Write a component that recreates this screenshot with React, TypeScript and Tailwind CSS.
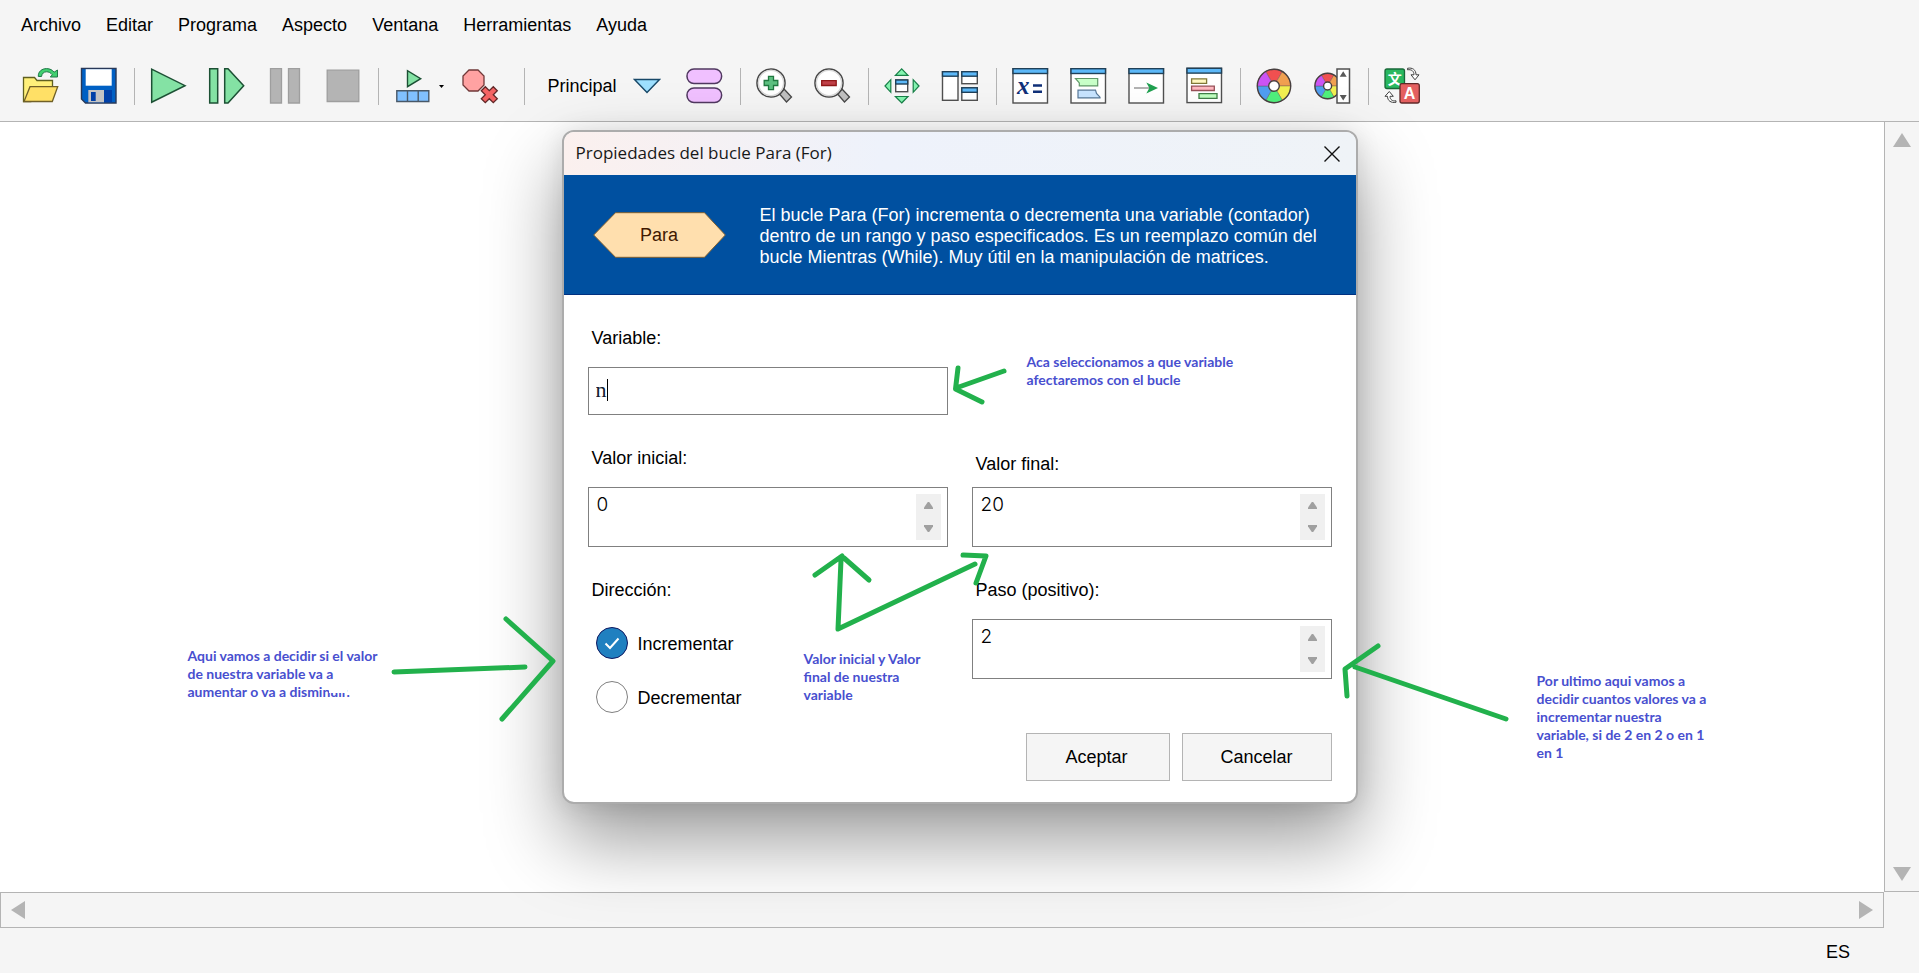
import { useState, type ReactNode } from "react";

const menus = ["Archivo", "Editar", "Programa", "Aspecto", "Ventana", "Herramientas", "Ayuda"];

function Icon({ children }: { children: ReactNode }) {
  return (
    <svg width="40" height="40" viewBox="0 0 40 40" fill="none" aria-hidden="true" className="shrink-0">
      {children}
    </svg>
  );
}

function Tool({ label, children }: { label: string; children: ReactNode }) {
  return (
    <button type="button" aria-label={label} className="flex w-[58px] shrink-0 justify-center">
      <Icon>{children}</Icon>
    </button>
  );
}

function Separator() {
  return (
    <div className="flex w-3 shrink-0 justify-end pt-0.5 pr-1">
      <div className="h-[37px] w-px bg-[#b4b4b4]" />
    </div>
  );
}

function MiniWindow({ x, y, w, h, bar }: { x: number; y: number; w: number; h: number; bar: number }) {
  return (
    <>
      <rect x={x} y={y} width={w} height={h} fill="#fff" stroke="#505050" strokeWidth="1.4" />
      <rect x={x} y={y} width={w} height={bar} fill="#5cb8f8" stroke="#204058" strokeWidth="1.4" />
    </>
  );
}

const wheelColors = ["#f05050", "#f0a050", "#f2f050", "#50f07c", "#509ef0", "#cc54f4"];

function Wheel({ cx, cy, r, hole }: { cx: number; cy: number; r: number; hole: number }) {
  const at = (deg: number) => {
    const a = ((deg - 90) * Math.PI) / 180;
    return `${cx + r * Math.cos(a)} ${cy + r * Math.sin(a)}`;
  };
  return (
    <>
      {wheelColors.map((c, i) => (
        <path key={c} fill={c} d={`M${cx} ${cy}L${at(i * 60 - 30)}A${r} ${r} 0 0 1 ${at(i * 60 + 30)}Z`} stroke="#605050" strokeWidth=".4" />
      ))}
      <circle cx={cx} cy={cy} r={r} stroke="#484040" strokeWidth="1.4" />
      <circle cx={cx} cy={cy} r={hole} fill="#fff" stroke="#484040" strokeWidth="1.4" />
    </>
  );
}

function Lens() {
  return (
    <>
      <path d="M25.500 28l4.500-5 7.500 8-5 5z" fill="#c0c0c0" stroke="#484848" strokeWidth="1.3" />
      <circle cx="17" cy="17" r="14" fill="#fff" stroke="#484848" strokeWidth="1.6" />
      <circle cx="17" cy="17" r="12.6" stroke="#d8d8d8" strokeWidth="1.4" />
    </>
  );
}

function Toolbar() {
  return (
    <div className="flex h-[71px] items-start overflow-hidden pt-4 pl-[11px]">
      <Tool label="Abrir">
        <path d="M3.5 35.5v-24h11l2.5 3h15.500V21L11 35.500z" fill="#fff07a" stroke="#606020" strokeWidth="1.3" />
        <path d="M10 20.700h27.700l-5.400 14.800H4z" fill="#ffe066" stroke="#706028" strokeWidth="1.3" />
        <path d="M18.300 10.500C18 5.500 22 2.600 26.500 2.600c3.500 0 6 1.500 7.600 3.600L37.500 4v7h-7.200l2-2.200C30.500 6.500 28.600 5.800 26.500 5.800c-2.700 0-4.600 1.700-5 4.700z" fill="#40d070" stroke="#207848" />
      </Tool>
      <Tool label="Guardar">
        <path d="M3.500 2.500H38V37H7.500l-4-4z" fill="#0060c4" stroke="#283858" strokeWidth="1.400" />
        <path d="M7.700 3.200h26v16.500h-26z" fill="#fff" />
        <path d="M10.300 24H34v12.300H10.300z" fill="#0040a8" />
        <path d="M10.300 24H26v12.300H10.300z" fill="#c4c4c4" />
        <path d="M13 26h4.700v9H13z" fill="#0040a8" />
      </Tool>
      <Separator />
      <Tool label="Ejecutar">
        <path d="M3.700 3.200v33l33.300-16.500z" fill="#84e2a4" stroke="#1c5034" strokeWidth="1.500" />
      </Tool>
      <Tool label="Paso a paso">
        <path d="M3.700 2.700h8V37h-8zM18.700 2.700H22l15.700 17L22 37h-3.300z" fill="#84e2a4" stroke="#1c5034" strokeWidth="1.500" />
      </Tool>
      <Tool label="Pausar">
        <path d="M6.500 2.700h11V37h-11zM24.500 2.700h11V37h-11z" fill="#b4b4b4" stroke="#9e9e9e" strokeWidth="1.300" />
      </Tool>
      <Tool label="Detener">
        <path d="M5.200 4.200h31.600v31.300H5.200z" fill="#b4b4b4" stroke="#9e9e9e" strokeWidth="1.300" />
      </Tool>
      <Separator />
      <button type="button" aria-label="Velocidad" className="flex w-[54px] shrink-0 justify-center pl-1">
        <Icon>
          <path d="M15.500 4.700v16l13.200-8z" fill="#84e2a4" stroke="#1c5034" strokeWidth="1.400" />
          <path d="M4.800 24.700h32v10.800h-32zM15.500 24.700v10.800M26.200 24.700v10.800" fill="#80c0ff" stroke="#485868" strokeWidth="1.400" />
        </Icon>
      </button>
      <button type="button" aria-label="Opciones de velocidad" className="flex h-10 w-[14px] shrink-0 items-center pl-0.5">
        <svg width="5" height="3" viewBox="0 0 5 3" aria-hidden="true">
          <path d="M0 0h5L2.500 3z" fill="#000" />
        </svg>
      </button>
      <Tool label="Quitar puntos de interrupción">
        <path d="M9 4h9l6 6v9l-6 6H9l-6-6v-9z" fill="#ffa2a2" stroke="#703838" strokeWidth="1.300" />
        <path d="M21.300 24.700l4-4 4 4 4-4 4 4-4 4 4 4-4 4-4-4-4 4-4-4 4-4z" fill="#f46464" stroke="#602828" strokeWidth="1.300" />
      </Tool>
      <div className="w-2 shrink-0" />
      <Separator />
      <button type="button" className="flex h-10 w-[146px] shrink-0 items-center justify-center gap-4 pl-1">
        <span>Principal</span>
        <svg width="28" height="16" viewBox="0 0 28 16" aria-hidden="true">
          <path d="M1.500 1.500h25L14 14.500z" fill="#9ee0ff" stroke="#184868" strokeWidth="1.400" />
        </svg>
      </button>
      <Tool label="Funciones">
        <rect x="3" y="3" width="34.600" height="14.600" rx="7" fill="#f0c0ff" stroke="#503860" strokeWidth="1.500" />
        <rect x="3" y="22" width="34.600" height="14.600" rx="7" fill="#f0c0ff" stroke="#503860" strokeWidth="1.500" />
      </Tool>
      <Separator />
      <Tool label="Acercar">
        <Lens />
        <path d="M14.500 10.300h5v4.200h4.300v5h-4.300v4.200h-5v-4.200h-4.300v-5h4.300z" fill="#5cc080" stroke="#207840" strokeWidth="1.300" />
      </Tool>
      <Tool label="Alejar">
        <Lens />
        <path d="M9.700 14.600h14.500v4.900H9.700z" fill="#c04048" stroke="#901818" strokeWidth="1.300" />
      </Tool>
      <Separator />
      <Tool label="Mover ventana">
        <path d="M19.700 2.800l6.300 6.500H13.400zM19.700 37l6.300-6.500H13.400zM3 20l5.800-6.300v12.600zM37 20l-5.800-6.300v12.600z" fill="#84f4b0" stroke="#188048" strokeWidth="1.200" />
        <MiniWindow x={13.700} y={14} w={12} h={11.700} bar={4} />
      </Tool>
      <Tool label="Organizar ventanas">
        <MiniWindow x={2.500} y={5.700} w={15.500} h={28.600} bar={4.500} />
        <MiniWindow x={21.800} y={5.700} w={15.500} h={12} bar={4.500} />
        <MiniWindow x={21.800} y={21.800} w={15.500} h={12.500} bar={4.500} />
      </Tool>
      <Separator />
      <Tool label="Ventana de variables">
        <MiniWindow x={3} y={2.700} w={34.500} h={34.300} bar={4.800} />
        <text x="7" y="28" fontFamily="Liberation Serif, serif" fontSize="25" fontWeight="700" fontStyle="italic" fill="#103078">x</text>
        <path d="M23 18.300h9v2.500h-9zM23 24.600h9v2.500h-9z" fill="#103078" />
      </Tool>
      <Tool label="Ventana de consola">
        <MiniWindow x={3} y={2.700} w={34.500} h={34.300} bar={4.800} />
        <path d="M7.500 12.500h22.200v7.400H11.300v-3z" fill="#c8ffc8" stroke="#609868" strokeWidth="1.200" />
        <path d="M10 24.200h17.500l1 3.300 3.500 3.700v.700H10z" fill="#c8e4ff" stroke="#587898" strokeWidth="1.200" />
      </Tool>
      <Tool label="Ventana de ejecución">
        <MiniWindow x={3} y={2.700} w={34.500} h={34.300} bar={4.800} />
        <path d="M8 22h16" stroke="#a0a0a0" strokeWidth="1.600" />
        <path d="M20.300 16.500L32 22l-11.700 5.500 3-5.500z" fill="#20a050" />
      </Tool>
      <Tool label="Ventana de código">
        <MiniWindow x={3} y={2.300} w={34.500} h={34.300} bar={4.800} />
        <path d="M7.600 12.800h15v4.500h-15z" fill="#fff8c0" stroke="#807838" strokeWidth="1.300" />
        <path d="M7.600 20.200h22.700v4.300H7.600z" fill="#ffb8c0" stroke="#985058" strokeWidth="1.300" />
        <path d="M15 27.600h18v4.700H15z" fill="#c0ffc0" stroke="#408048" strokeWidth="1.300" />
      </Tool>
      <Separator />
      <Tool label="Colores">
        <Wheel cx={20} cy={20} r={16.700} hole={5.300} />
      </Tool>
      <Tool label="Esquema de color">
        <Wheel cx={15.600} cy={20} r={12.700} hole={4} />
        <path d="M25 3h12.500v34H25z" fill="#fff" stroke="#505050" strokeWidth="1.500" />
        <path d="M31.200 5.300l3.500 5.500h-7zM31.200 34.500l3.500-5.500h-7z" fill="#585858" />
      </Tool>
      <Separator />
      <Tool label="Idioma">
        <rect x="3" y="3" width="19.500" height="19.500" rx="2" fill="#28b860" stroke="#186838" strokeWidth="1.300" />
        <text x="12.700" y="18" textAnchor="middle" fontFamily="Noto Sans CJK SC, sans-serif" fontSize="14" fontWeight="700" fill="#fff">文</text>
        <rect x="18" y="17.700" width="19.300" height="19.300" rx="2" fill="#e46060" stroke="#602828" strokeWidth="1.300" />
        <text x="27.600" y="33" textAnchor="middle" fontFamily="Liberation Sans, sans-serif" fontSize="16" fontWeight="700" fill="#fff">A</text>
        <path d="M25.500 3.800c4-.6 6.500 1.200 6.500 5h-3l4 5 4-5h-3c0-5-3.500-7.500-8.500-6.500z" fill="#fff" stroke="#404040" />
        <path d="M14 36.300c-5 .8-8.500-1.500-8.500-6H3L7.300 25.500l4 4.800H8c0 3.500 2.500 5 6 4.500z" fill="#fff" stroke="#404040" />
      </Tool>
    </div>
  );
}

function Spinner({ id, initial, label, className }: { id: string; initial: string; label: string; className: string }) {
  const [value, setValue] = useState(initial);
  const step = (d: number) => setValue(String((Number(value) || 0) + d));
  return (
    <div className="flex flex-col">
      <label htmlFor={id} className={className}>{label}</label>
      <div className="flex h-[60px] items-start border border-[#808080] bg-white p-1.5 pt-0 pl-2">
        <input
          id={id}
          value={value}
          onChange={(e) => setValue(e.target.value)}
          className="h-8 min-w-0 flex-1 font-[Inter,sans-serif] text-[19px] font-light text-black outline-none"
        />
        <div className="mt-1.5 flex w-[25px] flex-col bg-[#f0f0f0]">
          <button type="button" aria-label={`Aumentar ${label}`} onClick={() => step(1)} className="flex h-[23px] items-center justify-center">
            <svg width="9" height="7" viewBox="0 0 9 7" aria-hidden="true"><path d="M3.800 0h1.400L9 5.500V7H0V5.500z" fill="#a0a0a0" /></svg>
          </button>
          <button type="button" aria-label={`Disminuir ${label}`} onClick={() => step(-1)} className="flex h-[23px] items-center justify-center">
            <svg width="9" height="7" viewBox="0 0 9 7" aria-hidden="true"><path d="M3.800 7h1.400L9 1.500V0H0v1.500z" fill="#a0a0a0" /></svg>
          </button>
        </div>
      </div>
    </div>
  );
}

function Direction({ value, label, current, onPick }: { value: string; label: string; current: string; onPick: (v: string) => void }) {
  const on = current === value;
  return (
    <label className="flex h-8 items-center gap-2.5 pl-2">
      <span className="relative flex size-8">
        <input
          type="radio"
          name="direccion"
          checked={on}
          onChange={() => onPick(value)}
          className="size-8 appearance-none rounded-full border border-[#808080] bg-white checked:border-[#101860] checked:bg-[#2080c0]"
        />
        {on && (
          <svg className="pointer-events-none absolute inset-0" width="32" height="32" viewBox="0 0 32 32" fill="none" aria-hidden="true">
            <path d="M9.500 16.500l4.500 4.500 8.500-9.500" stroke="#fff" strokeWidth="2" />
          </svg>
        )}
      </span>
      <span className="pt-0.5">{label}</span>
    </label>
  );
}

function Dialog() {
  const [dir, setDir] = useState("inc");
  const [variable, setVariable] = useState("n");
  return (
    <section
      role="dialog"
      aria-label="Propiedades del bucle Para (For)"
      className="w-[796px] overflow-hidden rounded-xl border-2 border-[#acacac] bg-white shadow-[0_36px_76px_rgba(0,0,0,0.40),0_2px_24px_rgba(0,0,0,0.10)]"
    >
      <div className="flex h-[43px] items-center justify-between bg-linear-to-r from-[#fbf0ee] via-[#eef2fb] via-40% to-[#eff3f7] pr-4 pl-3">
        <h1 className="font-['Open_Sans',sans-serif] text-[17px] text-[#181818]">Propiedades del bucle Para (For)</h1>
        <button type="button" aria-label="Cerrar">
          <svg width="16" height="16" viewBox="0 0 16 16" aria-hidden="true" className="block">
            <path d="M.500.500l15 15M15.500.500l-15 15" stroke="#101010" strokeWidth="1.400" />
          </svg>
        </button>
      </div>
      <div className="flex h-[120px] items-center gap-[34px] border-b border-[#003080] bg-[#0050a0] pl-[29px]">
        <svg width="133" height="46" viewBox="0 0 133 46" className="shrink-0" aria-hidden="true">
          <path d="M.700 23L22.500.700h89L132.300 23l-20.800 22.300h-89z" fill="#ffdfae" stroke="#806030" />
          <text x="66" y="29" textAnchor="middle" fontFamily="Liberation Sans, sans-serif" fontSize="18" fill="#401800">Para</text>
        </svg>
        <p className="pt-1 text-lg/[21px] text-white">
          El bucle Para (For) incrementa o decrementa una variable (contador)
          <br />
          dentro de un rango y paso especificados. Es un reemplazo común del
          <br />
          bucle Mientras (While). Muy útil en la manipulación de matrices.
        </p>
      </div>
      <form className="px-6 pt-[31px] pb-[21px]" onSubmit={(e) => e.preventDefault()}>
        <div className="grid grid-cols-2 gap-x-6 gap-y-[31px]">
          <div className="flex flex-col">
            <label htmlFor="variable" className="mb-[17px] h-6 pl-1 leading-6">Variable:</label>
            <div className="relative flex h-12 border border-[#808080] bg-white">
              <input
                id="variable"
                value={variable}
                onChange={(e) => setVariable(e.target.value)}
                className="min-w-0 flex-1 px-[7px] pb-0.5 font-[Liberation_Serif,serif] text-[22px] text-[#102030] caret-transparent outline-none"
              />
              <span className="absolute top-[11px] left-[18px] h-[22px] w-px bg-black" />
            </div>
          </div>
          <div />
          <Spinner id="inicial" initial="0" label="Valor inicial:" className="mb-[17px] h-6 pl-1 leading-6" />
          <Spinner id="final" initial="20" label="Valor final:" className="mt-1.5 mb-[11px] h-6 pl-1 leading-6" />
          <fieldset className="flex flex-col">
            <legend className="mb-[25px] h-6 pl-1 leading-6">Dirección:</legend>
            <div className="flex flex-col gap-[22px]">
              <Direction value="inc" label="Incrementar" current={dir} onPick={setDir} />
              <Direction value="dec" label="Decrementar" current={dir} onPick={setDir} />
            </div>
          </fieldset>
          <Spinner id="paso" initial="2" label="Paso (positivo):" className="mb-[17px] h-6 pl-1 leading-6" />
        </div>
        <div className="mt-5 flex justify-end gap-3">
          <button type="submit" className="h-12 w-[144px] border border-[#b4b4b4] bg-[#f5f5f5] pr-0.5">Aceptar</button>
          <button type="button" className="h-12 w-[150px] border border-[#b4b4b4] bg-[#f5f5f5]">Cancelar</button>
        </div>
      </form>
    </section>
  );
}

function Annotations() {
  const note = "absolute whitespace-pre font-[Lato,sans-serif] text-sm/[18px] font-bold text-[#484fcf]";
  return (
    <div className="pointer-events-none absolute inset-0">
      <svg className="absolute inset-0 overflow-visible" width="796" height="674" viewBox="562 130 796 674" fill="none" stroke="#22b14c" strokeWidth="5" strokeLinecap="round" strokeLinejoin="round" aria-hidden="true">
        <path d="M1004 371L956 388M958 368l-2.500 21L982 402" />
        <path d="M815 575l27-19M844 558l25 22M841 560l-3 69L975 564M963 555l23 1-10 27" />
        <path d="M394 672l131-5M506 619l47 42-51 58" />
        <path d="M1378 646l-33 23 2 27M1355 667l151 52" />
      </svg>
      <p className={`${note} top-[223px] left-[465px]`}>{"Aca seleccionamos a que variable\nafectaremos con el bucle"}</p>
      <p className={`${note} top-[520px] left-[242px]`}>{"Valor inicial y Valor\nfinal de nuestra\nvariable"}</p>
      <p className={`${note} top-[517px] -left-[374px]`}>
        {"Aqui vamos a decidir si el valor\nde nuestra variable va a\naumentar o va a disminuir."}
        <span className="absolute right-[30px] bottom-2 h-[9px] w-[18px] bg-white" />
      </p>
      <p className={`${note} top-[542px] left-[975px]`}>{"Por ultimo aqui vamos a\ndecidir cuantos valores va a\nincrementar nuestra\nvariable, si de 2 en 2 o en 1\nen 1"}</p>
    </div>
  );
}

export default function App() {
  return (
    <div className="relative flex min-h-screen flex-col overflow-hidden bg-[#f5f5f5] font-['Liberation_Sans',sans-serif] text-lg text-black">
      <header className="border-b border-[#b4b4b4]">
        <nav className="flex h-[50px] items-center gap-[25px] pl-[21px]">
          {menus.map((m) => (
            <button key={m} type="button">{m}</button>
          ))}
        </nav>
        <Toolbar />
      </header>
      <main className="flex flex-1">
        <div className="flex-1 bg-white" />
        <div className="flex w-[35px] flex-col items-center justify-between border-b border-l border-[#b4b4b4] pt-[11px] pb-2.5">
          <button type="button" aria-label="Subir">
            <svg width="18" height="14" viewBox="0 0 18 14" aria-hidden="true" className="block"><path d="M9 0l9 14H0z" fill="#b4b4b4" /></svg>
          </button>
          <button type="button" aria-label="Bajar">
            <svg width="18" height="14" viewBox="0 0 18 14" aria-hidden="true" className="block"><path d="M9 14l9-14H0z" fill="#b4b4b4" /></svg>
          </button>
        </div>
      </main>
      <div className="mr-[35px] flex h-9 items-center justify-between border border-[#b4b4b4] px-2.5">
        <button type="button" aria-label="Izquierda">
          <svg width="14" height="18" viewBox="0 0 14 18" aria-hidden="true" className="block"><path d="M0 9l14-9v18z" fill="#b4b4b4" /></svg>
        </button>
        <button type="button" aria-label="Derecha">
          <svg width="14" height="18" viewBox="0 0 14 18" aria-hidden="true" className="block"><path d="M14 9L0 0v18z" fill="#b4b4b4" /></svg>
        </button>
      </div>
      <footer className="flex h-[45px] items-center justify-end pt-0.5 pr-[69px]">
        <button type="button">ES</button>
      </footer>
      <div className="absolute top-[130px] left-1/2 -translate-x-1/2">
        <Dialog />
        <Annotations />
      </div>
    </div>
  );
}
